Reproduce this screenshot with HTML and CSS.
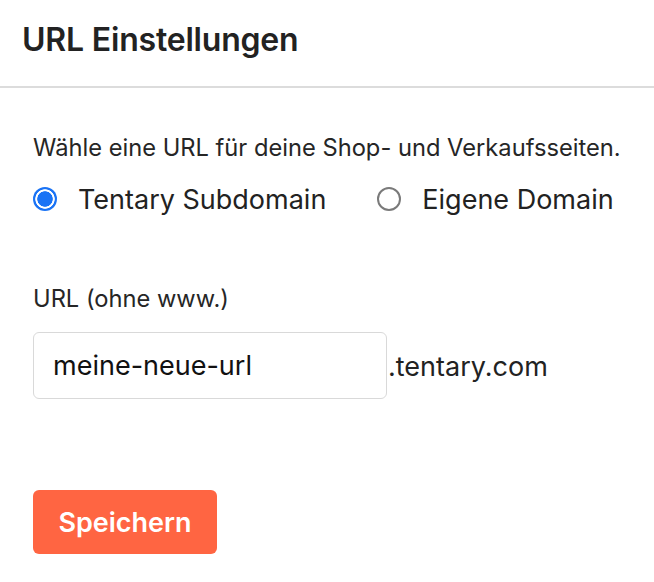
FILE: index.html
```html
<!DOCTYPE html>
<html lang="de">
<head>
<meta charset="utf-8">
<link rel="stylesheet" href="styles.css">
</head>
<body>
<div class="panel">
  <header class="head">
    <h1 class="title">URL Einstellungen</h1>
  </header>
  <div class="body">
    <p class="desc">Wähle eine URL für deine Shop- und Verkaufsseiten.</p>
    <div class="radios">
      <label class="radio">
        <span class="dot checked"></span>
        <span class="rlabel">Tentary Subdomain</span>
      </label>
      <label class="radio">
        <span class="dot"></span>
        <span class="rlabel">Eigene Domain</span>
      </label>
    </div>
    <div class="field">
      <div class="flabel">URL (ohne www.)</div>
      <div class="inputrow">
        <div class="input">meine-neue-url</div>
        <span class="suffix">.tentary.com</span>
      </div>
    </div>
    <button class="save">Speichern</button>
  </div>
</div>
</body>
</html>
```
FILE: styles.css
```css
html, body {
  margin: 0;
  padding: 0;
  background: #fff;
}
body {
  font-family: Inter, "Noto Sans", sans-serif;
  color: #222;
}
.head {
  height: 88px;
  border-bottom: 2px solid #dcdcdc;
  padding: 0 22px;
  display: flex;
  align-items: center;
  box-sizing: border-box;
}
.title {
  margin: 0;
  font-size: 32px;
  line-height: 40px;
  font-weight: 600;
  color: #222;
  letter-spacing: -0.2px;
  position: relative;
  top: -3px;
}
.body {
  padding: 46px 33px 0;
}
.desc {
  margin: 0;
  font-size: 23.7px;
  line-height: 28px;
  color: #262626;
}
.radios {
  display: flex;
  gap: 51px;
  margin-top: 21px;
  align-items: center;
}
.radio {
  display: flex;
  align-items: center;
  gap: 21px;
}
.dot {
  width: 24px;
  height: 24px;
  border-radius: 50%;
  border: 2px solid #7a7a7a;
  box-sizing: border-box;
  flex: none;
  position: relative;
  top: -1px;
}
.dot.checked {
  border: none;
  background: radial-gradient(circle, #1a73f5 0 7.4px, #fff 8px 9.4px, #1a73f5 10px);
}
.rlabel {
  font-size: 27px;
  line-height: 34px;
  color: #222;
}
.field {
  margin-top: 68px;
}
.flabel {
  font-size: 23.7px;
  line-height: 28px;
  color: #262626;
}
.inputrow {
  display: flex;
  align-items: center;
  margin-top: 19px;
}
.input {
  width: 354px;
  height: 67px;
  box-sizing: border-box;
  border: 1.5px solid #d9d9d9;
  border-radius: 6px;
  padding-left: 19px;
  display: flex;
  align-items: center;
  font-size: 27px;
  color: #111;
  flex: none;
}
.suffix {
  font-size: 27px;
  color: #222;
  margin-left: 1px;
  position: relative;
  top: 1px;
}
.save {
  display: block;
  margin-top: 91px;
  width: 184px;
  height: 64px;
  background: #ff6542;
  color: #fff;
  border: none;
  border-radius: 6px;
  font-family: Inter, sans-serif;
  font-size: 27px;
  font-weight: 600;
  padding: 0;
}
```
